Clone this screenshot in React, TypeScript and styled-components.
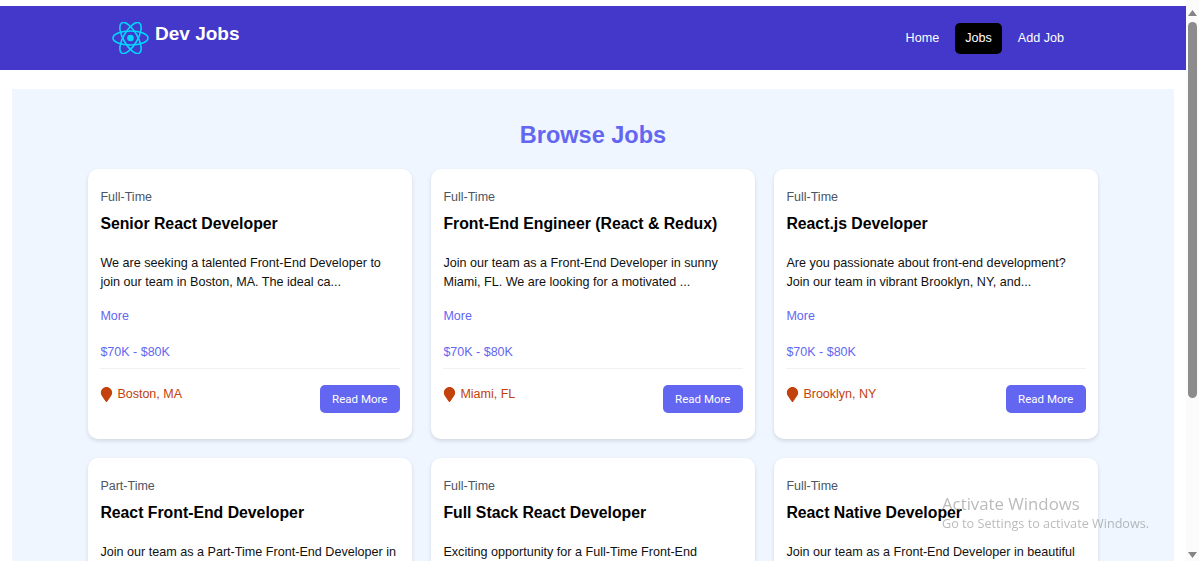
import React from "react";
import styled, { createGlobalStyle } from "styled-components";
import { FaMapMarker } from "react-icons/fa";

interface Job {
  id: number;
  type: string;
  title: string;
  description: string;
  location: string;
}

const jobs: Job[] = [
  {
    id: 1,
    type: "Full-Time",
    title: "Senior React Developer",
    description: "We are seeking a talented Front-End Developer to join our team in Boston, MA. The ideal ca...",
    location: "Boston, MA",
  },
  {
    id: 2,
    type: "Full-Time",
    title: "Front-End Engineer (React & Redux)",
    description: "Join our team as a Front-End Developer in sunny Miami, FL. We are looking for a motivated ...",
    location: "Miami, FL",
  },
  {
    id: 3,
    type: "Full-Time",
    title: "React.js Developer",
    description: "Are you passionate about front-end development? Join our team in vibrant Brooklyn, NY, and...",
    location: "Brooklyn, NY",
  },
  {
    id: 4,
    type: "Part-Time",
    title: "React Front-End Developer",
    description: "Join our team as a Part-Time Front-End Developer in beautiful Phoenix, AZ. We are looking ...",
    location: "Phoenix, AZ",
  },
  {
    id: 5,
    type: "Full-Time",
    title: "Full Stack React Developer",
    description: "Exciting opportunity for a Full-Time Front-End Developer in bustling Atlanta, GA. We are ...",
    location: "Atlanta, GA",
  },
  {
    id: 6,
    type: "Full-Time",
    title: "React Native Developer",
    description: "Join our team as a Front-End Developer in beautiful Portland, OR. We are looking for a sk...",
    location: "Portland, OR",
  },
];

const GlobalStyle = createGlobalStyle`
  * {
    box-sizing: border-box;
  }
  body {
    margin: 0;
    padding-right: 13px;
    background: #fff;
    font-family: "Liberation Sans", Arial, sans-serif;
  }
`;

const Navbar = styled.nav`
  margin-top: 6px;
  height: 64px;
  background: #4338ca;
  display: flex;
  align-items: center;
  justify-content: space-between;
  padding: 0 112px;
`;

const Brand = styled.a`
  display: flex;
  align-items: flex-start;
  gap: 6px;
  color: #fff;
  font-size: 19px;
  font-weight: 700;
  line-height: 24px;
  height: 32px;
`;

const NavLinks = styled.div`
  display: flex;
  gap: 6px;
`;

const NavLink = styled.a<{ $active?: boolean }>`
  color: #fff;
  font-size: 12.6px;
  line-height: 31px;
  padding: 0 10px;
  border-radius: 5px;
  background: ${(p) => (p.$active ? "#000" : "transparent")};
`;

const Section = styled.section`
  margin: 19px 12px 0;
  background: #eff6ff;
  padding: 32px 76px 40px;
`;

const Heading = styled.h2`
  margin: 0 0 20px;
  text-align: center;
  color: #6366f1;
  font-size: 23.5px;
  line-height: 28px;
  font-weight: 700;
`;

const Grid = styled.div`
  display: grid;
  grid-template-columns: repeat(3, 324px);
  gap: 19px;
`;

const Card = styled.article`
  height: 270px;
  background: #fff;
  border-radius: 10px;
  box-shadow: 0 2px 4px rgba(0, 0, 0, 0.12);
  padding: 21px 12.5px 0 12.4px;
`;

const JobType = styled.div`
  color: #4b5563;
  font-size: 12.5px;
  line-height: 15px;
`;

const JobTitle = styled.h3`
  margin: 9px 0 0;
  color: #000;
  font-size: 15.8px;
  line-height: 20px;
  font-weight: 700;
`;

const Description = styled.p`
  margin: 20px 0 0;
  color: #111;
  font-size: 12.6px;
  line-height: 19px;
`;

const MoreLink = styled.a`
  display: block;
  margin-top: 17px;
  color: #6366f1;
  font-size: 12.5px;
  line-height: 15px;
`;

const Salary = styled.div`
  margin-top: 21px;
  color: #6366f1;
  font-size: 12.5px;
  line-height: 15px;
`;

const Divider = styled.hr`
  margin: 8px 0 0;
  border: 0;
  height: 1px;
  background: #f1f1f1;
`;

const CardFooter = styled.div`
  margin-top: 16px;
  display: flex;
  align-items: flex-start;
  justify-content: space-between;
`;

const Location = styled.div`
  display: flex;
  align-items: center;
  gap: 3px;
  margin: 1px 0 0 -1px;
  color: #c2410c;
  font-size: 12.5px;
  line-height: 17px;
`;

const ReadMore = styled.a`
  width: 79.5px;
  height: 28px;
  background: #6366f1;
  border-radius: 5px;
  color: #fff;
  font-family: Roboto, "Liberation Sans", sans-serif;
  font-size: 11.5px;
  line-height: 28px;
  text-align: center;
`;

const Scrollbar = styled.div`
  position: fixed;
  top: 0;
  right: 0;
  bottom: 0;
  width: 13px;
  background: #fbfbfb;
  display: flex;
  flex-direction: column;
  align-items: center;
  padding: 10px 0 3px;
`;

const ScrollThumb = styled.div`
  width: 9px;
  height: 376px;
  margin: 6px 0 auto;
  background: #8c8c8c;
  border-radius: 5px;
`;

const ArrowIcon = styled.svg`
  display: block;
  flex: none;
`;

const Watermark = styled.div`
  position: fixed;
  left: 942px;
  top: 493px;
  color: rgba(120, 120, 120, 0.5);
  font-family: "Open Sans", sans-serif;
  pointer-events: none;
`;

const WatermarkTitle = styled.div`
  font-size: 16.8px;
  line-height: 21px;
`;

const WatermarkHint = styled.div`
  font-size: 12.65px;
  line-height: 18px;
`;

const ReactLogo: React.FC = () => (
  <svg width="37" height="32" viewBox="-18.5 -16 37 32" fill="none" stroke="#00d8ff" strokeWidth="1.6">
    <circle r="3.3" fill="#00d8ff" stroke="none" />
    <ellipse rx="17.5" ry="7" />
    <ellipse rx="17.5" ry="7" transform="rotate(60)" />
    <ellipse rx="17.5" ry="7" transform="rotate(120)" />
  </svg>
);

const ScrollArrow: React.FC<{ down?: boolean }> = ({ down }) => (
  <ArrowIcon width="9" height="6" viewBox="0 0 9 6">
    <polygon points={down ? "0,0 9,0 4.5,6" : "4.5,0 9,6 0,6"} fill="#858585" />
  </ArrowIcon>
);

const App: React.FC = () => {
  return (
    <>
      <GlobalStyle />
      <Navbar>
        <Brand>
          <ReactLogo />
          Dev Jobs
        </Brand>
        <NavLinks>
          <NavLink>Home</NavLink>
          <NavLink $active>Jobs</NavLink>
          <NavLink>Add Job</NavLink>
        </NavLinks>
      </Navbar>
      <Section>
        <Heading>Browse Jobs</Heading>
        <Grid>
          {jobs.map((job) => (
            <Card key={job.id}>
              <JobType>{job.type}</JobType>
              <JobTitle>{job.title}</JobTitle>
              <Description>{job.description}</Description>
              <MoreLink>More</MoreLink>
              <Salary>$70K - $80K</Salary>
              <Divider />
              <CardFooter>
                <Location>
                  <FaMapMarker size={15} />
                  {job.location}
                </Location>
                <ReadMore>Read More</ReadMore>
              </CardFooter>
            </Card>
          ))}
        </Grid>
      </Section>
      <Scrollbar>
        <ScrollArrow />
        <ScrollThumb />
        <ScrollArrow down />
      </Scrollbar>
      <Watermark>
        <WatermarkTitle>Activate Windows</WatermarkTitle>
        <WatermarkHint>Go to Settings to activate Windows.</WatermarkHint>
      </Watermark>
    </>
  );
};

export default App;
